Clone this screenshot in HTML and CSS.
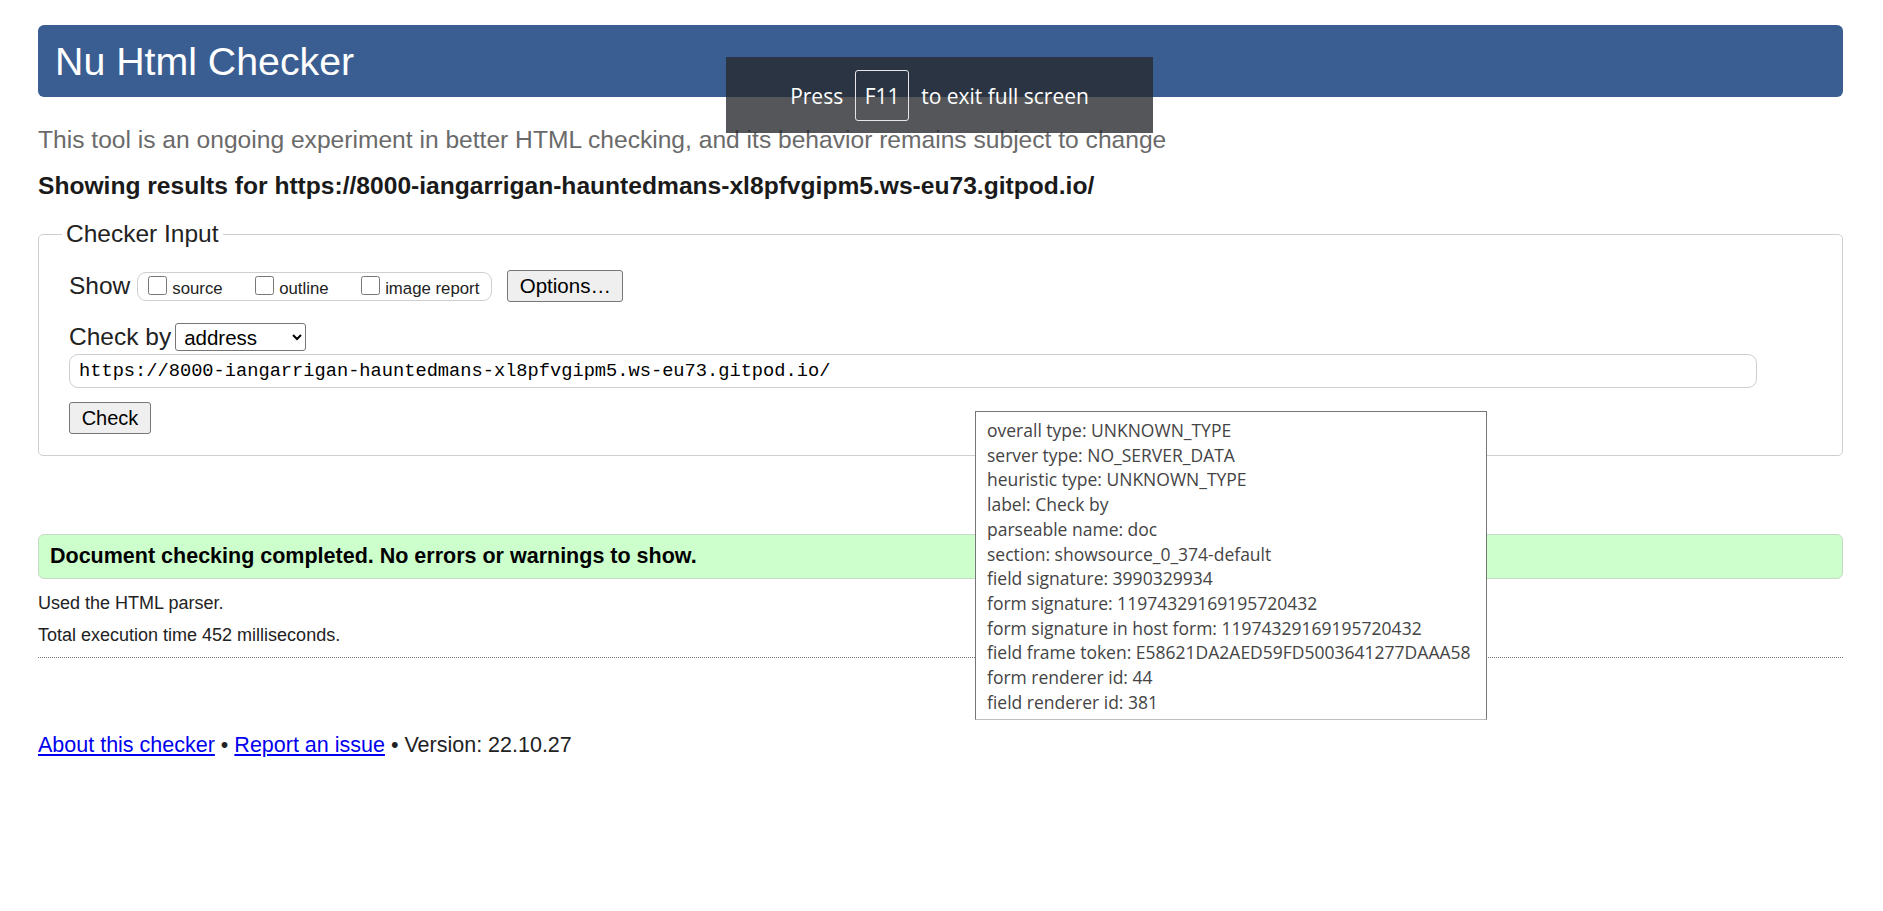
FILE: index.html
```html
<!DOCTYPE html>
<html lang="en">
<head>
<meta charset="utf-8">
<title>Nu Html Checker</title>
<link rel="stylesheet" href="styles.css">
</head>
<body>
<h1 class="title">Nu Html Checker</h1>
<p class="intro">This tool is an ongoing experiment in better HTML checking, and its behavior remains subject to change</p>
<h2 class="results">Showing results for https://8000-iangarrigan-hauntedmans-xl8pfvgipm5.ws-eu73.gitpod.io/</h2>

<fieldset class="input-box">
  <legend class="legend">Checker Input</legend>
  <div class="row show-row">
    <span class="label">Show</span>
    <span class="show-group">
      <label class="opt"><input class="cb" type="checkbox"><span>source</span></label>
      <label class="opt"><input class="cb" type="checkbox"><span>outline</span></label>
      <label class="opt"><input class="cb" type="checkbox"><span>image report</span></label>
    </span>
    <button class="btn options" type="button">Options…</button>
  </div>
  <div class="row by-row">
    <span class="label">Check by</span>
    <select class="by"><option>address</option></select>
  </div>
  <input class="url" type="text" value="https://8000-iangarrigan-hauntedmans-xl8pfvgipm5.ws-eu73.gitpod.io/">
  <div class="row submit-row"><button class="btn check" type="button">Check</button></div>
</fieldset>

<p class="success">Document checking completed. No errors or warnings to show.</p>
<p class="details">Used the HTML parser.</p>
<p class="details">Total execution time 452 milliseconds.</p>
<hr class="rule">
<p class="footer"><a href="#">About this checker</a> • <a href="#">Report an issue</a> • Version: 22.10.27</p>

<div class="fs-notice">
  <span>Press</span><span class="key">F11</span><span>to exit full screen</span>
</div>

<div class="tip">
  <div>overall type: UNKNOWN_TYPE</div>
  <div>server type: NO_SERVER_DATA</div>
  <div>heuristic type: UNKNOWN_TYPE</div>
  <div>label: Check by</div>
  <div>parseable name: doc</div>
  <div>section: showsource_0_374-default</div>
  <div>field signature: 3990329934</div>
  <div>form signature: 11974329169195720432</div>
  <div>form signature in host form: 11974329169195720432</div>
  <div>field frame token: E58621DA2AED59FD5003641277DAAA58</div>
  <div>form renderer id: 44</div>
  <div>field renderer id: 381</div>
</div>
</body>
</html>
```

FILE: styles.css
```css
html {
  background: #fff;
}
body {
  margin: 0;
  padding: 0 40px 0 38px;
  font-family: "Liberation Sans", Arial, sans-serif;
  font-size: 18px;
  color: #222;
  position: relative;
  min-height: 911px;
  box-sizing: border-box;
}
.title {
  margin: 25px 0 0;
  height: 72px;
  line-height: 73px;
  padding: 0 17px;
  font-size: 39.3px;
  font-weight: normal;
  color: #fff;
  background: #3a5e92;
  border-radius: 6px;
}
.intro {
  margin: 27px 0 0;
  line-height: 31px;
  font-size: 24.6px;
  color: #6a6a6a;
}
.results {
  margin: 16px 0 0;
  line-height: 30px;
  font-size: 24.6px;
  font-weight: bold;
  color: #1a1a1a;
}
.input-box {
  margin: 18px 0 0;
  padding: 0 30px 21px;
  border: 1px solid #cfcfcf;
  border-radius: 5px;
  min-width: 0;
}
.legend {
  margin-left: -7px;
  padding: 0 4px;
  font-size: 24.5px;
  line-height: 30px;
  color: #222;
}
.row {
  display: flex;
  align-items: center;
}
.label {
  font-size: 24.5px;
  line-height: 30px;
  color: #222;
}
.show-row {
  margin-top: 21px;
  height: 32px;
}
.show-group {
  display: flex;
  align-items: center;
  margin-left: 7px;
  height: 27px;
  padding: 0 12px 0 10px;
  border: 1px solid #cfcfcf;
  border-radius: 9px;
  gap: 32.5px;
}
.opt {
  display: flex;
  align-items: center;
  font-size: 16.8px;
  gap: 5px;
}
.opt span {
  padding-top: 5px;
}
.cb {
  width: 19px;
  height: 19px;
  margin: 0 0 2px;
  accent-color: #555;
}
.btn {
  font-family: "Liberation Sans", Arial, sans-serif;
  background: #efefef;
  border: 1px solid #767676;
  border-radius: 3px;
  color: #000;
  padding: 0;
}
.options {
  margin-left: 15px;
  width: 116px;
  height: 32px;
  font-size: 20.5px;
}
.by-row {
  margin-top: 21px;
  height: 28px;
}
.by {
  margin-left: 4px;
  width: 131px;
  height: 28px;
  font-family: "Liberation Sans", Arial, sans-serif;
  font-size: 20.5px;
  border: 1px solid #767676;
  border-radius: 3px;
  background: #fff;
  color: #000;
  padding: 0 0 0 4px;
}
.url {
  display: block;
  margin: 3px 0 0;
  width: 1688px;
  height: 34px;
  box-sizing: border-box;
  border: 1px solid #cfcfcf;
  border-radius: 9px;
  padding: 0 9px;
  font-family: "Liberation Mono", "Courier New", monospace;
  font-size: 18.7px;
  color: #000;
  background: #fff;
}
.submit-row {
  margin-top: 14px;
}
.check {
  width: 82px;
  height: 32px;
  font-size: 20px;
}
.success {
  margin: 78px 0 0;
  height: 45px;
  box-sizing: border-box;
  line-height: 43px;
  padding: 0 11px;
  font-size: 21.5px;
  font-weight: bold;
  color: #000;
  background: #ccffcc;
  border: 1px solid #c8d8c8;
  border-radius: 6px;
}
.details {
  margin: 0;
  line-height: 32px;
  font-size: 18px;
  color: #222;
}
.success + .details {
  margin-top: 8px;
}
.rule {
  margin: 6px 0 0;
  border: 0;
  border-top: 1px dotted #777;
  height: 0;
}
.footer {
  margin: 72px 0 0;
  line-height: 30px;
  font-size: 21.5px;
  color: #222;
}
.footer a {
  color: #0000ee;
}
.fs-notice {
  position: absolute;
  left: 726px;
  top: 57px;
  width: 427px;
  height: 76px;
  display: flex;
  align-items: center;
  justify-content: center;
  gap: 12px;
  background: rgba(38, 40, 44, 0.79);
  color: #fff;
  font-family: "Open Sans", "Noto Sans", sans-serif;
  font-size: 21px;
  padding-top: 1px;
  box-sizing: border-box;
}
.key {
  display: flex;
  align-items: center;
  justify-content: center;
  width: 54px;
  height: 51px;
  box-sizing: border-box;
  border: 1.5px solid #e6e6e6;
  border-radius: 3px;
}
.tip {
  position: absolute;
  left: 975px;
  top: 411px;
  width: 512px;
  height: 309px;
  box-sizing: border-box;
  padding: 6px 10px 0 11px;
  background: #fff;
  border: 1px solid #767676;
  border-bottom-color: #bdbdbd;
  font-family: "Open Sans", "Noto Sans", sans-serif;
  font-size: 17.5px;
  line-height: 24.7px;
  color: #444;
  white-space: nowrap;
}
```
